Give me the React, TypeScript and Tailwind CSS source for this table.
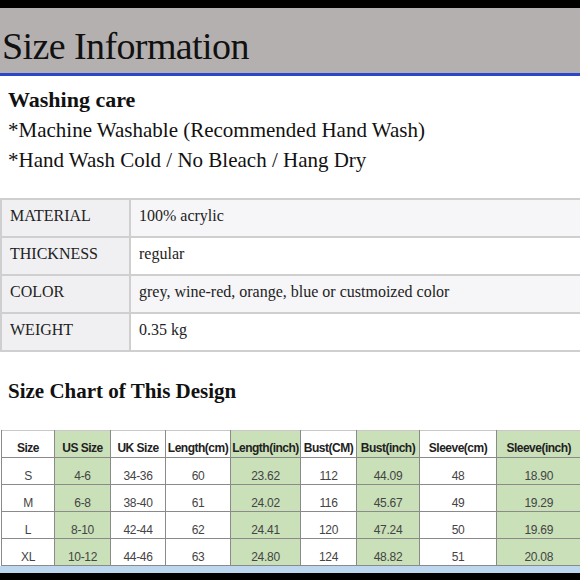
import React from 'react';

const specs = [
  { k: 'MATERIAL', v: '100% acrylic' },
  { k: 'THICKNESS', v: 'regular' },
  { k: 'COLOR', v: 'grey, wine-red, orange, blue or custmoized color' },
  { k: 'WEIGHT', v: '0.35 kg' },
];

const cols = [
  { h: 'Size', w: 'w-[53px]', green: false },
  { h: 'US Size', w: 'w-[56px]', green: true },
  { h: 'UK Size', w: 'w-[55px]', green: false },
  { h: 'Length(cm)', w: 'w-[65px]', green: false },
  { h: 'Length(inch)', w: 'w-[70px]', green: true },
  { h: 'Bust(CM)', w: 'w-[56px]', green: false },
  { h: 'Bust(inch)', w: 'w-[63px]', green: true },
  { h: 'Sleeve(cm)', w: 'w-[77px]', green: false },
  { h: 'Sleeve(inch)', w: 'w-[84px]', green: true },
];

const rows = [
  ['S', '4-6', '34-36', '60', '23.62', '112', '44.09', '48', '18.90'],
  ['M', '6-8', '38-40', '61', '24.02', '116', '45.67', '49', '19.29'],
  ['L', '8-10', '42-44', '62', '24.41', '120', '47.24', '50', '19.69'],
  ['XL', '10-12', '44-46', '63', '24.80', '124', '48.82', '51', '20.08'],
];

export default function App() {
  return (
    <div className="w-[580px] h-[580px] overflow-hidden bg-white flex flex-col font-['Liberation_Serif',serif] text-[#111]">
      <div className="h-2 bg-black shrink-0" />
      <div className="h-[68px] shrink-0 bg-[#b5b0b0] border-b-[3px] border-[#2b47c9] flex items-end pl-[2px] pb-[5px]">
        <h1 className="text-[38px] leading-[44px] tracking-[-0.6px]">Size Information</h1>
      </div>

      <div className="pl-2 pt-[9px] text-[21px] leading-[30px]">
        <h2 className="font-bold text-[22px]">Washing care</h2>
        <p>*Machine Washable (Recommended Hand Wash)</p>
        <p>*Hand Wash Cold / No Bleach / Hang Dry</p>
      </div>

      <table className="mt-[23px] w-[600px] border-collapse table-fixed text-[16px] text-[#222] shrink-0">
        <tbody>
          {specs.map((s, i) => (
            <tr key={s.k} className="h-[38px]">
              <td className="w-[129px] border-2 border-[#cfcfcf] bg-[#f0f0f2] pl-2 pb-[4px]">{s.k}</td>
              <td className={`border-2 border-[#cfcfcf] pl-2 pb-[4px] ${i % 2 === 0 ? 'bg-[#f6f6f8]' : 'bg-white'}`}>{s.v}</td>
            </tr>
          ))}
        </tbody>
      </table>

      <h2 className="pl-2 mt-[24px] text-[21px] leading-[30px] font-bold">Size Chart of This Design</h2>

      <table className="mt-[24px] ml-[1px] w-[579px] border-collapse table-fixed font-['Liberation_Sans',sans-serif] shrink-0">
        <thead>
          <tr className="h-[27px] border-t border-[#c8c8c8]">
            {cols.map((c) => (
              <th key={c.h}
                className={`${c.w} border-l border-b border-[#8a8a8a] align-bottom pb-[2px] text-[12px] leading-[14px] font-bold tracking-[-0.5px] text-[#222] ${c.green ? 'bg-[#c9e0b8]' : 'bg-white'}`}>
                {c.h}
              </th>
            ))}
          </tr>
        </thead>
        <tbody>
          {rows.map((r) => (
            <tr key={r[0]} className="h-[27px]">
              {r.map((v, j) => (
                <td key={j}
                  className={`border-l border-b border-[#8a8a8a] text-center align-bottom pb-[1px] text-[12px] leading-[14px] tracking-[-0.3px] text-[#444] ${cols[j].green ? 'bg-[#c9e0b8]' : 'bg-white'}`}>
                  {v}
                </td>
              ))}
            </tr>
          ))}
        </tbody>
      </table>
      <div className="h-[7px] bg-[#bdd7ee] shrink-0" />
      <div className="flex-1 bg-black" />
    </div>
  );
}
